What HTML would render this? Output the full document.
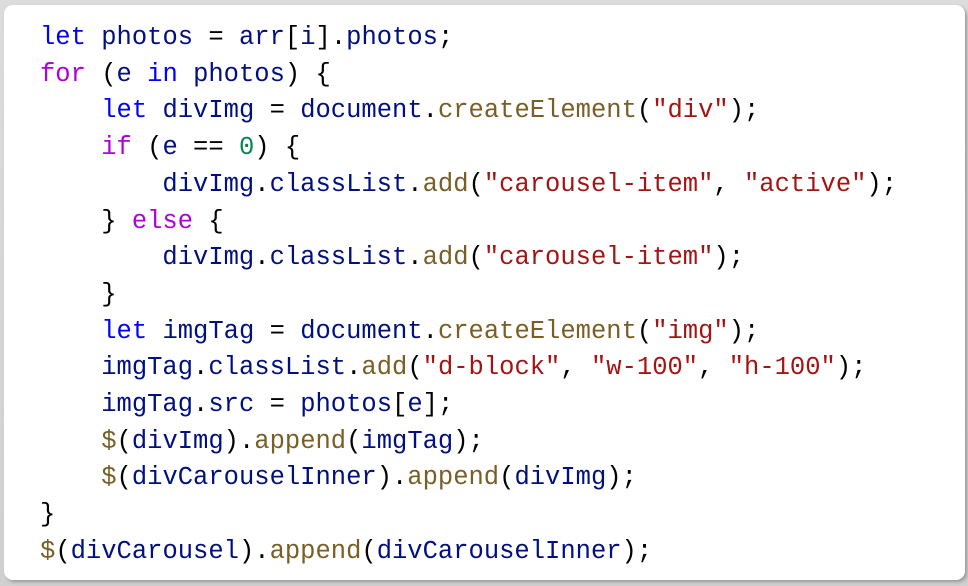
<!DOCTYPE html>
<html><head><style>
html,body{margin:0;padding:0;width:968px;height:586px;background:#b8b8b8;overflow:hidden}
body{background:linear-gradient(#dcdcdc,#d0d0d0)}
.card{position:absolute;left:4px;top:5px;width:961px;height:575px;background:#fff;border-radius:9px;box-shadow:2px 2px 3px #999}
pre{position:absolute;left:40px;top:20px;margin:0;font-family:"Liberation Mono",monospace;font-size:25.5px;line-height:36.7px;color:#000}
.k{color:#0000ff}.v{color:#001080}.f{color:#795e26}.s{color:#a31515}.c{color:#af00db}.n{color:#098658}
</style></head><body><div class="card"></div>
<pre><span class="k">let</span> <span class="v">photos</span> = <span class="v">arr</span>[<span class="v">i</span>].<span class="v">photos</span>;
<span class="c">for</span> (<span class="v">e</span> <span class="k">in</span> <span class="v">photos</span>) {
    <span class="k">let</span> <span class="v">divImg</span> = <span class="v">document</span>.<span class="f">createElement</span>(<span class="s">"div"</span>);
    <span class="c">if</span> (<span class="v">e</span> == <span class="n">0</span>) {
        <span class="v">divImg</span>.<span class="v">classList</span>.<span class="f">add</span>(<span class="s">"carousel-item"</span>, <span class="s">"active"</span>);
    } <span class="c">else</span> {
        <span class="v">divImg</span>.<span class="v">classList</span>.<span class="f">add</span>(<span class="s">"carousel-item"</span>);
    }
    <span class="k">let</span> <span class="v">imgTag</span> = <span class="v">document</span>.<span class="f">createElement</span>(<span class="s">"img"</span>);
    <span class="v">imgTag</span>.<span class="v">classList</span>.<span class="f">add</span>(<span class="s">"d-block"</span>, <span class="s">"w-100"</span>, <span class="s">"h-100"</span>);
    <span class="v">imgTag</span>.<span class="v">src</span> = <span class="v">photos</span>[<span class="v">e</span>];
    <span class="f">$</span>(<span class="v">divImg</span>).<span class="f">append</span>(<span class="v">imgTag</span>);
    <span class="f">$</span>(<span class="v">divCarouselInner</span>).<span class="f">append</span>(<span class="v">divImg</span>);
}
<span class="f">$</span>(<span class="v">divCarousel</span>).<span class="f">append</span>(<span class="v">divCarouselInner</span>);</pre>
</body></html>
